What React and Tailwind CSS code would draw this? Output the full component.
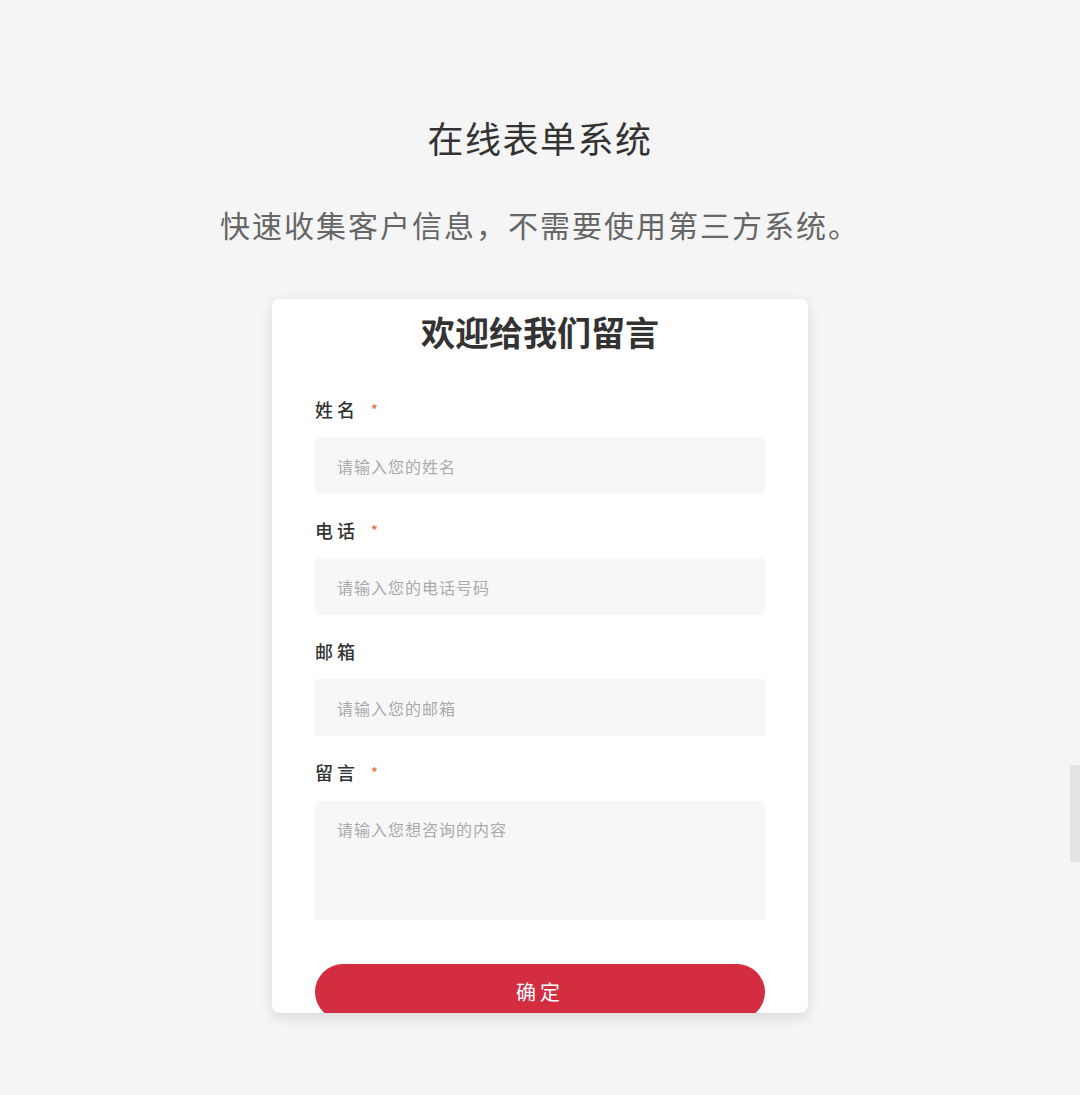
const FIELDS = [
  { label: "姓名", placeholder: "请输入您的姓名", required: true },
  { label: "电话", placeholder: "请输入您的电话号码", required: true },
  { label: "邮箱", placeholder: "请输入您的邮箱", required: false },
];

const font = { fontFamily: '"Noto Sans CJK SC", "Noto Sans", sans-serif' };

function Label({ text, required }) {
  return (
    <div className="flex items-center h-6 text-[18px] leading-6 font-medium text-[#333] tracking-[4px]">
      <span>{text}</span>
      {required && <span className="ml-3 text-[14px] text-[#e2703f]">*</span>}
    </div>
  );
}

export default function App() {
  return (
    <div className="min-h-[1095px] bg-[#f5f5f5] relative overflow-hidden" style={font}>
      <div className="flex flex-col items-center pt-[114px]">
        <h1 className="text-[36px] leading-[46px] text-[#333] tracking-[1.5px]">在线表单系统</h1>
        <p className="mt-[44px] text-[30px] leading-[40px] text-[#666] tracking-[2px]">快速收集客户信息，不需要使用第三方系统。</p>

        <form className="mt-[55px] w-[536px] h-[714px] bg-white rounded-lg shadow-[0_4px_14px_rgba(0,0,0,0.12)] overflow-hidden px-[43px]">
          <h2 className="mt-[13px] text-center text-[34px] leading-10 font-bold text-[#333]">欢迎给我们留言</h2>

          <div className="mt-[45px] flex flex-col">
            {FIELDS.map((f, i) => (
              <div key={f.label} className={i > 0 ? "mt-6" : ""}>
                <Label text={f.label} required={f.required} />
                <input
                  className="mt-4 w-full h-[57px] bg-[#f7f7f7] rounded px-[22px] text-[16px] tracking-[1px] outline-none placeholder:text-[#aaa]"
                  placeholder={f.placeholder}
                />
              </div>
            ))}
            <div className="mt-6">
              <Label text="留言" required />
              <textarea
                className="mt-[17px] block w-full h-[119px] bg-[#f7f7f7] rounded px-[22px] pt-4 text-[16px] tracking-[1px] outline-none resize-none placeholder:text-[#aaa]"
                placeholder="请输入您想咨询的内容"
              />
            </div>
          </div>

          <button type="button" className="mt-[44px] w-full h-[56px] rounded-full bg-[#d32d3f] text-white text-[20px] tracking-[4px]">
            确定
          </button>
        </form>
      </div>

      <div className="absolute right-0 top-[765px] w-[10px] h-[97px] bg-[#e4e4e4]" />
    </div>
  );
}
